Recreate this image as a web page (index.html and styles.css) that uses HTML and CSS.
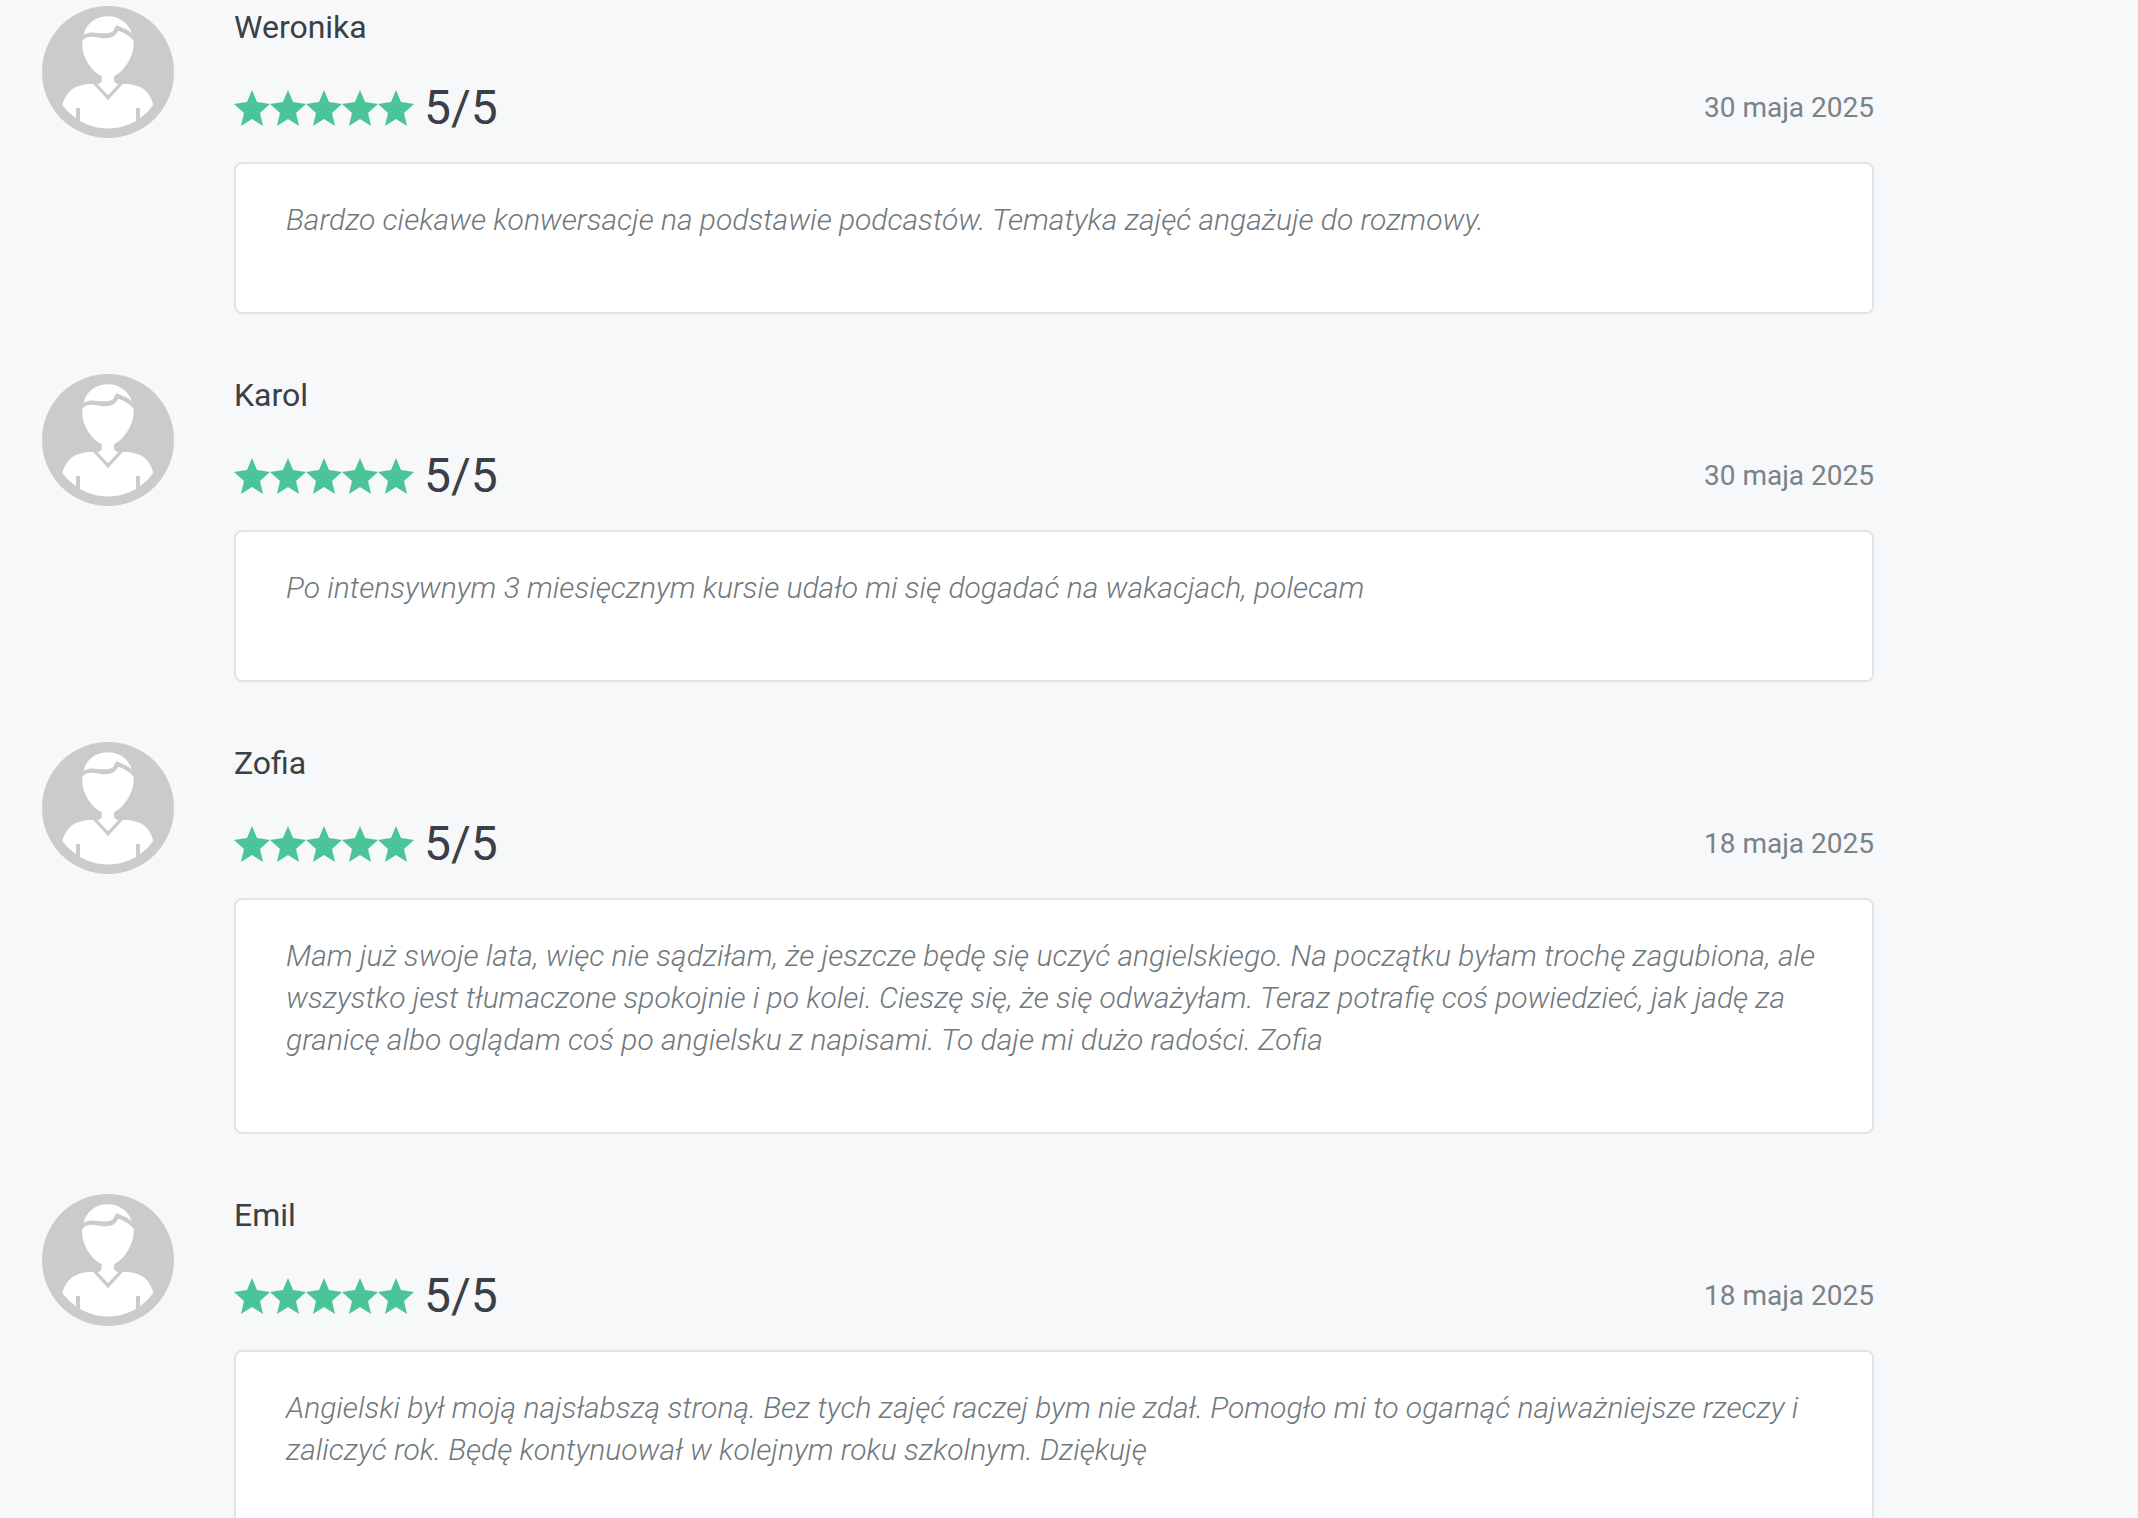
FILE: index.html
```html
<!DOCTYPE html>
<html lang="pl">
<head>
<meta charset="utf-8">
<meta name="viewport" content="width=device-width, initial-scale=1">
<title>Opinie</title>
<link rel="stylesheet" href="styles.css">
</head>
<body>
<svg class="sprite" aria-hidden="true">
  <symbol id="avatar" viewBox="36 18 396 396">
    <circle cx="234" cy="216" r="198" fill="#cbcbcb"/>
    <g fill="#fff">
      <path d="M161 104C169 70 198 49 234 49C266 49 294 67 306 101C292 88 279 84 260 76C252 84 254 93 244 97C216 108 192 88 161 104Z"/>
      <path d="M157 122C178 99 204 116 226 115C250 113 258 106 264 92C282 97 298 106 311 122C313 151 302 176 287 198C277 213 266 221 252 229V242C252 247 258 249 265 253L234 286L203 253C210 249 215 247 215 242V228C199 220 190 212 180 198C164 176 154 150 157 122Z"/>
      <path d="M97 315C106 282 128 250 190 252L234 301L278 252C340 250 362 282 370 315A169 169 0 0 1 330 355V324H318V363A169 169 0 0 1 150 363V324H138V355A169 169 0 0 1 97 315Z"/>
    </g>
  </symbol>
  <symbol id="stars" viewBox="0 0 180 36">
    <g fill="#4bc498">
      <path id="star" d="M18 0L23 12L36 14L26 23L29 36L18 29L7 36L10 23L0 14L13 12Z"/>
      <use href="#star" x="36"/>
      <use href="#star" x="72"/>
      <use href="#star" x="108"/>
      <use href="#star" x="144"/>
    </g>
  </symbol>
</svg>
<main class="reviews">
  <article class="review">
    <svg class="avatar" aria-hidden="true"><use href="#avatar"/></svg>
    <div class="body">
      <h2 class="name">Weronika</h2>
      <div class="meta">
        <div class="rating"><svg class="stars" aria-hidden="true"><use href="#stars"/></svg><span>5/5</span></div>
        <time class="date" datetime="2025-05-30">30 maja 2025</time>
      </div>
      <blockquote class="card">Bardzo ciekawe konwersacje na podstawie podcastów. Tematyka zajęć angażuje do rozmowy.</blockquote>
    </div>
  </article>
  <article class="review">
    <svg class="avatar" aria-hidden="true"><use href="#avatar"/></svg>
    <div class="body">
      <h2 class="name">Karol</h2>
      <div class="meta">
        <div class="rating"><svg class="stars" aria-hidden="true"><use href="#stars"/></svg><span>5/5</span></div>
        <time class="date" datetime="2025-05-30">30 maja 2025</time>
      </div>
      <blockquote class="card">Po intensywnym 3 miesięcznym kursie udało mi się dogadać na wakacjach, polecam</blockquote>
    </div>
  </article>
  <article class="review">
    <svg class="avatar" aria-hidden="true"><use href="#avatar"/></svg>
    <div class="body">
      <h2 class="name">Zofia</h2>
      <div class="meta">
        <div class="rating"><svg class="stars" aria-hidden="true"><use href="#stars"/></svg><span>5/5</span></div>
        <time class="date" datetime="2025-05-18">18 maja 2025</time>
      </div>
      <blockquote class="card">Mam już swoje lata, więc nie sądziłam, że jeszcze będę się uczyć angielskiego. Na początku byłam trochę zagubiona, ale wszystko jest tłumaczone spokojnie i po kolei. Cieszę się, że się odważyłam. Teraz potrafię coś powiedzieć, jak jadę za granicę albo oglądam coś po angielsku z napisami. To daje mi dużo radości. Zofia</blockquote>
    </div>
  </article>
  <article class="review">
    <svg class="avatar" aria-hidden="true"><use href="#avatar"/></svg>
    <div class="body">
      <h2 class="name">Emil</h2>
      <div class="meta">
        <div class="rating"><svg class="stars" aria-hidden="true"><use href="#stars"/></svg><span>5/5</span></div>
        <time class="date" datetime="2025-05-18">18 maja 2025</time>
      </div>
      <blockquote class="card">Angielski był moją najsłabszą stroną. Bez tych zajęć raczej bym nie zdał. Pomogło mi to ogarnąć najważniejsze rzeczy i zaliczyć rok. Będę kontynuował w kolejnym roku szkolnym. Dziękuję</blockquote>
    </div>
  </article>
</main>
</body>
</html>
```
FILE: styles.css
```css
* {
  box-sizing: border-box;
}

body {
  margin: 0;
  background: #f6f8fa;
  color: #3a4046;
  font-family: Roboto, "Liberation Sans", sans-serif;
}

.sprite {
  display: none;
}

.reviews {
  display: flex;
  flex-direction: column;
  gap: 60px;
  padding: 6px 264px 60px 42px;
}

.review {
  display: flex;
  gap: 60px;
}

.avatar {
  flex: none;
  width: 132px;
  height: 132px;
}

.body {
  flex: 1;
  min-width: 0;
}

.name {
  margin: 0 0 32px;
  font-size: 32px;
  font-weight: 400;
  line-height: 42px;
}

.meta {
  display: flex;
  align-items: center;
  justify-content: space-between;
  height: 56px;
  margin-bottom: 26px;
}

.rating {
  display: flex;
  align-items: center;
  gap: 10px;
  font-size: 48px;
  line-height: 56px;
}

.stars {
  width: 180px;
  height: 36px;
}

.date {
  color: #7a8288;
  font-size: 28px;
  line-height: 42px;
}

.card {
  margin: 0;
  padding: 35px 48px 71px 50px;
  border: 2px solid #dfe4e8;
  border-radius: 8px;
  background: #fff;
  color: #6f787d;
  font-size: 30px;
  font-style: italic;
  font-weight: 300;
  line-height: 42px;
}
```
